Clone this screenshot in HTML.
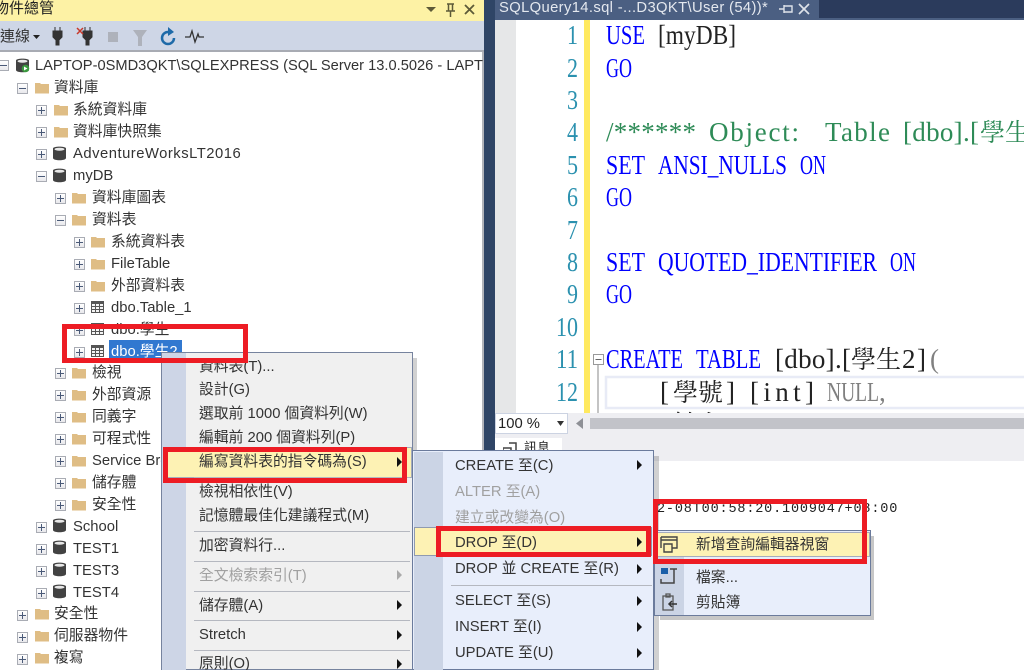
<!DOCTYPE html>
<html><head><meta charset="utf-8"><style>
html,body{margin:0;padding:0;background:#fff}
#p{position:relative;width:1024px;height:670px;overflow:hidden;background:#fff;font-family:"Liberation Sans","Noto Sans CJK TC",sans-serif;font-size:14.8px;color:#333}
#p div,#p svg{position:absolute}
.t{height:22px;line-height:24px;white-space:nowrap}
.x{width:9px;height:9px;border:1px solid #a9acb4;background:linear-gradient(#fff,#e8e8ec)}
.x:before{content:"";position:absolute;left:1px;top:4px;width:7px;height:1px;background:#4a5a78}
.p:after{content:"";position:absolute;left:4px;top:1px;width:1px;height:7px;background:#4a5a78}
.g{color:#a0a0a0!important}
.s{height:1px;background:#b5b8c0}
.a{width:0;height:0;border-left:5px solid #111;border-top:5px solid transparent;border-bottom:5px solid transparent}
.r{border:5px solid #ed1c24;box-sizing:border-box;z-index:20}
</style></head><body><div id="p">
<svg width="0" height="0"><defs>
<g id="f"><path d="M0 3h5l1 1h8v9.500H0z" fill="#dfbd85"/></g>
<g id="d"><path d="M0 2.500C0 0 13 0 13 2.500V12C13 15 0 15 0 12z" fill="#424242"/><ellipse cx="6.500" cy="3.200" rx="5" ry="1.500" fill="#e8e8e8"/></g>
<g id="b"><path d="M0 1h13v12H0z" fill="#555"/><path d="M1 4h3v2H1zM5 4h3v2H5zM9 4h3v2H9zM1 7h3v2H1zM5 7h3v2H5zM9 7h3v2H9zM1 10h3v2H1zM5 10h3v2H5zM9 10h3v2H9z" fill="#f4f4f4"/></g>
</defs></svg>

<!-- left title & toolbar -->
<div style="left:0;top:0;width:484px;height:21px;background:#fdf2a5"></div>
<div class="t" style="left:-6px;top:-3px;font-size:15px;color:#222">物件總管</div>
<svg style="left:425px;top:2px" width="56" height="16" viewBox="0 0 56 16"><path d="M1 5h10L6 10z" fill="#5d5a38"/><path d="M22 2h7M23.500 2v7h4V2M21 9h9M25.500 9v6" stroke="#5d5a38" fill="none" stroke-width="1.500"/><path d="M40 3l9 9M49 3l-9 9" stroke="#5d5a38" stroke-width="1.800"/></svg>
<div style="left:0;top:21px;width:484px;height:31px;background:#ced6e6;border-bottom:2px solid #a8abb3;box-sizing:border-box"></div>
<div class="t" style="left:0;top:25px;font-size:15px">連線</div>
<svg style="left:33px;top:35px" width="8" height="5"><path d="M0 0h7L3.500 4z" fill="#222"/></svg>
<svg style="left:52px;top:24px" width="160" height="24" viewBox="0 0 160 24"><path d="M3 3v4M8 3v4M1 7h9v6l-3 3v5H4v-5l-3-3z" fill="#333" stroke="#333"/><path d="M33 3v4M38 3v4M31 7h9v6l-3 3v5h-3v-5l-3-3z" fill="#333" stroke="#333"/><path d="M25 4l6 6M31 4l-6 6" stroke="#c8392b" stroke-width="1.500"/><rect x="56" y="8" width="10" height="10" fill="#aeb2bb"/><path d="M81 6h14l-5 7v9h-4v-9z" fill="#aeb2bb"/><path d="M116 8A6 6 0 1 0 122 14" fill="none" stroke="#1e6aa8" stroke-width="2.500"/><path d="M116 3l6 5-6 4z" fill="#1e6aa8"/><path d="M133 13h5l2-6 3 11 3-8 1 3h5" fill="none" stroke="#333" stroke-width="1.300"/></svg>

<!-- tree -->
<div style="left:482px;top:52px;width:2px;height:618px;background:#b2b4ba"></div>

<div class="x" style="left:-2px;top:60px"></div>
<svg style="left:16px;top:58px" width="14" height="15"><use href="#d"/><circle cx="9.500" cy="10.500" r="3.800" fill="#3a9a3e"/><path d="M8 8.500v4l3.500-2z" fill="#fff"/></svg>
<div class="t" style="left:35px;top:54px;font-size:14.66px">LAPTOP-0SMD3QKT\SQLEXPRESS (SQL Server 13.0.5026 - LAPT</div>

<div class="x" style="left:17px;top:83px"></div><svg style="left:35px;top:80px" width="14" height="14"><use href="#f"/></svg><div class="t" style="left:54px;top:76px">資料庫</div>
<div class="x p" style="left:36px;top:105px"></div><svg style="left:54px;top:102px" width="14" height="14"><use href="#f"/></svg><div class="t" style="left:73px;top:98px">系統資料庫</div>
<div class="x p" style="left:36px;top:127px"></div><svg style="left:54px;top:124px" width="14" height="14"><use href="#f"/></svg><div class="t" style="left:73px;top:120px">資料庫快照集</div>
<div class="x p" style="left:36px;top:149px"></div><svg style="left:53px;top:146px" width="14" height="15"><use href="#d"/></svg><div class="t" style="left:73px;top:142px;letter-spacing:.5px">AdventureWorksLT2016</div>
<div class="x" style="left:36px;top:171px"></div><svg style="left:53px;top:168px" width="14" height="15"><use href="#d"/></svg><div class="t" style="left:73px;top:164px">myDB</div>
<div class="x p" style="left:55px;top:193px"></div><svg style="left:72px;top:190px" width="14" height="14"><use href="#f"/></svg><div class="t" style="left:92px;top:186px">資料庫圖表</div>
<div class="x" style="left:55px;top:215px"></div><svg style="left:72px;top:212px" width="14" height="14"><use href="#f"/></svg><div class="t" style="left:92px;top:208px">資料表</div>
<div class="x p" style="left:74px;top:237px"></div><svg style="left:91px;top:234px" width="14" height="14"><use href="#f"/></svg><div class="t" style="left:111px;top:230px">系統資料表</div>
<div class="x p" style="left:74px;top:259px"></div><svg style="left:91px;top:256px" width="14" height="14"><use href="#f"/></svg><div class="t" style="left:111px;top:252px">FileTable</div>
<div class="x p" style="left:74px;top:281px"></div><svg style="left:91px;top:278px" width="14" height="14"><use href="#f"/></svg><div class="t" style="left:111px;top:274px">外部資料表</div>
<div class="x p" style="left:74px;top:303px"></div><svg style="left:91px;top:300px" width="13" height="14"><use href="#b"/></svg><div class="t" style="left:111px;top:296px">dbo.Table_1</div>
<div class="x p" style="left:74px;top:325px"></div><svg style="left:91px;top:322px" width="13" height="14"><use href="#b"/></svg><div class="t" style="left:111px;top:318px">dbo.學生</div>
<div class="x p" style="left:74px;top:347px"></div><svg style="left:91px;top:344px" width="13" height="14"><use href="#b"/></svg>
<div class="t" style="left:109px;top:340px;width:73px;height:21px;background:#3178d0;color:#fff;padding-left:2px;box-sizing:border-box">dbo.學生2</div>
<div class="x p" style="left:55px;top:368px"></div><svg style="left:72px;top:365px" width="14" height="14"><use href="#f"/></svg><div class="t" style="left:92px;top:361px">檢視</div>
<div class="x p" style="left:55px;top:390px"></div><svg style="left:72px;top:387px" width="14" height="14"><use href="#f"/></svg><div class="t" style="left:92px;top:383px">外部資源</div>
<div class="x p" style="left:55px;top:412px"></div><svg style="left:72px;top:409px" width="14" height="14"><use href="#f"/></svg><div class="t" style="left:92px;top:405px">同義字</div>
<div class="x p" style="left:55px;top:434px"></div><svg style="left:72px;top:431px" width="14" height="14"><use href="#f"/></svg><div class="t" style="left:92px;top:427px">可程式性</div>
<div class="x p" style="left:55px;top:456px"></div><svg style="left:72px;top:453px" width="14" height="14"><use href="#f"/></svg><div class="t" style="left:92px;top:449px">Service Broker</div>
<div class="x p" style="left:55px;top:478px"></div><svg style="left:72px;top:475px" width="14" height="14"><use href="#f"/></svg><div class="t" style="left:92px;top:471px">儲存體</div>
<div class="x p" style="left:55px;top:500px"></div><svg style="left:72px;top:497px" width="14" height="14"><use href="#f"/></svg><div class="t" style="left:92px;top:493px">安全性</div>
<div class="x p" style="left:36px;top:522px"></div><svg style="left:53px;top:518px" width="14" height="15"><use href="#d"/></svg><div class="t" style="left:73px;top:515px">School</div>
<div class="x p" style="left:36px;top:544px"></div><svg style="left:53px;top:540px" width="14" height="15"><use href="#d"/></svg><div class="t" style="left:73px;top:537px">TEST1</div>
<div class="x p" style="left:36px;top:566px"></div><svg style="left:53px;top:562px" width="14" height="15"><use href="#d"/></svg><div class="t" style="left:73px;top:559px">TEST3</div>
<div class="x p" style="left:36px;top:588px"></div><svg style="left:53px;top:584px" width="14" height="15"><use href="#d"/></svg><div class="t" style="left:73px;top:581px">TEST4</div>
<div class="x p" style="left:17px;top:610px"></div><svg style="left:35px;top:606px" width="14" height="14"><use href="#f"/></svg><div class="t" style="left:54px;top:602px">安全性</div>
<div class="x p" style="left:17px;top:632px"></div><svg style="left:35px;top:628px" width="14" height="14"><use href="#f"/></svg><div class="t" style="left:54px;top:624px">伺服器物件</div>
<div class="x p" style="left:17px;top:654px"></div><svg style="left:35px;top:650px" width="14" height="14"><use href="#f"/></svg><div class="t" style="left:54px;top:646px">複寫</div>

<!-- right side -->
<div style="left:484px;top:0;width:11px;height:670px;background:#2f4566"></div>
<div style="left:495px;top:0;width:529px;height:19px;background:#2b3b5c"></div>
<div style="left:495px;top:0;width:324px;height:18px;background:#4b5f82"></div>
<div style="left:495px;top:18px;width:529px;height:2px;background:#4b5f82"></div>
<div class="t" style="left:499px;top:-4px;color:#e4e8ef;letter-spacing:.35px">SQLQuery14.sql -...D3QKT\User (54))*</div>
<svg style="left:778px;top:2px" width="36" height="14" viewBox="0 0 36 14"><path d="M1 7h5M6 4h8v6H6zM6 3v8" stroke="#dfe3ea" fill="none" stroke-width="1.400"/><path d="M21 2l10 10M31 2L21 12" stroke="#dfe3ea" stroke-width="1.700"/></svg>

<!-- editor -->
<div style="left:495px;top:20px;width:21px;height:393px;background:#e6e7e8"></div>
<div style="left:584px;top:20px;width:6px;height:393px;background:#ffe95f"></div>
<svg style="left:495px;top:0" width="529" height="413" viewBox="495 0 529 413" font-family="'Liberation Serif','Noto Serif CJK TC',serif" font-size="27">
<rect x="606" y="377" width="430" height="31" fill="none" stroke="#e8ebf6" stroke-width="2.500"/>
<path d="M598 364V413" stroke="#8a8a8a"/><rect x="593.500" y="354.500" width="10" height="10" fill="#fff" stroke="#999"/><path d="M595.500 359.500h6" stroke="#666"/>
<g fill="#2b91af" text-anchor="end">
<text x="578" y="44" textLength="11" lengthAdjust="spacingAndGlyphs">1</text><text x="578" y="77" textLength="11" lengthAdjust="spacingAndGlyphs">2</text><text x="578" y="109" textLength="11" lengthAdjust="spacingAndGlyphs">3</text><text x="578" y="141" textLength="11" lengthAdjust="spacingAndGlyphs">4</text><text x="578" y="174" textLength="11" lengthAdjust="spacingAndGlyphs">5</text><text x="578" y="206" textLength="11" lengthAdjust="spacingAndGlyphs">6</text><text x="578" y="239" textLength="11" lengthAdjust="spacingAndGlyphs">7</text><text x="578" y="271" textLength="11" lengthAdjust="spacingAndGlyphs">8</text><text x="578" y="303" textLength="11" lengthAdjust="spacingAndGlyphs">9</text><text x="578" y="336" textLength="22" lengthAdjust="spacingAndGlyphs">10</text><text x="578" y="368" textLength="22" lengthAdjust="spacingAndGlyphs">11</text><text x="578" y="401" textLength="22" lengthAdjust="spacingAndGlyphs">12</text>
</g>
<g fill="#0000ff">
<text x="606" y="44" textLength="39" lengthAdjust="spacingAndGlyphs">USE</text>
<text x="606" y="77" textLength="26" lengthAdjust="spacingAndGlyphs">GO</text>
<text x="606" y="174" textLength="39" lengthAdjust="spacingAndGlyphs">SET</text>
<text x="658" y="174" textLength="129" lengthAdjust="spacingAndGlyphs">ANSI_NULLS</text>
<text x="800" y="174" textLength="26" lengthAdjust="spacingAndGlyphs">ON</text>
<text x="606" y="206" textLength="26" lengthAdjust="spacingAndGlyphs">GO</text>
<text x="606" y="271" textLength="39" lengthAdjust="spacingAndGlyphs">SET</text>
<text x="658" y="271" textLength="219" lengthAdjust="spacingAndGlyphs">QUOTED_IDENTIFIER</text>
<text x="890" y="271" textLength="26" lengthAdjust="spacingAndGlyphs">ON</text>
<text x="606" y="303" textLength="26" lengthAdjust="spacingAndGlyphs">GO</text>
<text x="606" y="368" textLength="77" lengthAdjust="spacingAndGlyphs">CREATE</text>
<text x="696" y="368" textLength="65" lengthAdjust="spacingAndGlyphs">TABLE</text>
</g>
<g fill="#222">
<text x="658" y="44" textLength="78" lengthAdjust="spacingAndGlyphs">[myDB]</text>
<text x="775" y="368" textLength="76" lengthAdjust="spacing">[dbo].[</text>
<text x="851" y="368" font-size="25">學生</text>
<text x="902" y="368">2</text>
<text x="917" y="368">]</text>
<text x="660" y="401">[</text>
<text x="673" y="401" font-size="25">學號</text>
<text x="726" y="401">]</text>
<text x="750" y="401" textLength="64" lengthAdjust="spacing">[int]</text>
<text x="660" y="433">[</text>
<text x="673" y="433" font-size="25">姓名</text>
</g>
<text x="930" y="368" fill="#808080">(</text>
<text x="827" y="401" fill="#808080" textLength="52" lengthAdjust="spacingAndGlyphs">NULL</text>
<text x="879" y="401" fill="#808080">,</text>
<g fill="#2e8b57">
<text x="606" y="141" textLength="90" lengthAdjust="spacing">/******</text>
<text x="709" y="141" textLength="90" lengthAdjust="spacing">Object:</text>
<text x="825" y="141" textLength="65" lengthAdjust="spacing">Table</text>
<text x="903" y="141" textLength="76" lengthAdjust="spacing">[dbo].[</text>
<text x="980" y="141" font-size="25">學生</text>
</g>
</svg>

<!-- zoom bar -->
<div style="left:495px;top:413px;width:529px;height:22px;background:#eeeef2"></div>
<div style="left:495px;top:413px;width:73px;height:21px;background:#fff;border:1px solid #ccd3e2;box-sizing:border-box"></div>
<div class="t" style="left:498px;top:412px;color:#222">100 %</div>
<svg style="left:556px;top:421px" width="10" height="6"><path d="M1 0h7L4.500 5z" fill="#333"/></svg>
<svg style="left:575px;top:418px" width="10" height="12"><path d="M8 0v11L1 5.500z" fill="#8e9096"/></svg>
<div style="left:590px;top:418px;width:434px;height:11px;background:#c2c3c9"></div>
<div style="left:495px;top:435px;width:529px;height:26px;background:#eeeef2"></div>
<div style="left:495px;top:438px;width:67px;height:23px;background:#fff"></div>
<svg style="left:503px;top:442px" width="16" height="14"><path d="M0 6h8v7H0zM6 1h7v10h-3" fill="none" stroke="#444" stroke-width="1.500"/></svg>
<div class="t" style="left:524px;top:436px;font-size:13px;color:#222">訊息</div>
<div class="t" style="left:657px;top:498px;font-family:'Liberation Mono',monospace;font-size:13.5px;letter-spacing:.83px;color:#222">2-08T00:58:20.1009047+08:00</div>

<!-- menu 1 -->
<div style="left:167px;top:358px;width:250px;height:312px;background:rgba(0,0,0,.18)"></div>
<div style="left:161px;top:352px;width:252px;height:318px;background:#f0f0f0;border:1px solid #76839e;box-sizing:border-box"></div>
<div style="left:162px;top:353px;width:24px;height:317px;background:#cdd5e6"></div>
<div class="t" style="left:199px;top:355px">資料表(T)...</div>
<div class="t" style="left:199px;top:378px">設計(G)</div>
<div class="t" style="left:199px;top:402px">選取前 1000 個資料列(W)</div>
<div class="t" style="left:199px;top:426px">編輯前 200 個資料列(P)</div>
<div style="left:164px;top:447px;width:248px;height:31px;background:#fdf2b4;border:1px solid #a5acbd;box-sizing:border-box"></div>
<div class="t" style="left:199px;top:450px">編寫資料表的指令碼為(S)</div>
<div class="a" style="left:397px;top:457px"></div>
<div class="s" style="left:194px;top:477px;width:216px"></div>
<div class="t" style="left:199px;top:480px">檢視相依性(V)</div>
<div class="t" style="left:199px;top:504px">記憶體最佳化建議程式(M)</div>
<div class="s" style="left:194px;top:531px;width:216px"></div>
<div class="t" style="left:199px;top:534px">加密資料行...</div>
<div class="s" style="left:194px;top:561px;width:216px"></div>
<div class="t g" style="left:199px;top:564px">全文檢索索引(T)</div>
<div class="a" style="left:397px;top:570px;border-left-color:#aaa"></div>
<div class="s" style="left:194px;top:591px;width:216px"></div>
<div class="t" style="left:199px;top:594px">儲存體(A)</div>
<div class="a" style="left:397px;top:600px"></div>
<div class="s" style="left:194px;top:620px;width:216px"></div>
<div class="t" style="left:199px;top:623px">Stretch</div>
<div class="a" style="left:397px;top:630px"></div>
<div class="s" style="left:194px;top:650px;width:216px"></div>
<div class="t" style="left:199px;top:652px">原則(O)</div>
<div class="a" style="left:397px;top:659px"></div>

<!-- menu 2 -->
<div style="left:419px;top:456px;width:240px;height:214px;background:rgba(0,0,0,.18)"></div>
<div style="left:412px;top:450px;width:242px;height:220px;background:#e8eefb;border:1px solid #6b7b9c;box-sizing:border-box"></div>
<div style="left:414px;top:452px;width:29px;height:218px;background:#cbd4e5"></div>
<div class="t" style="left:455px;top:454px">CREATE 至(C)</div><div class="a" style="left:637px;top:460px"></div>
<div class="t g" style="left:455px;top:480px">ALTER 至(A)</div>
<div class="t g" style="left:455px;top:506px">建立或改變為(O)</div>
<div style="left:414px;top:527px;width:238px;height:29px;background:#fdf2b4;border:1px solid #8f9ab0;box-sizing:border-box"></div>
<div class="t" style="left:455px;top:531px">DROP 至(D)</div><div class="a" style="left:637px;top:537px"></div>
<div class="t" style="left:455px;top:557px">DROP 並 CREATE 至(R)</div><div class="a" style="left:637px;top:564px"></div>
<div class="s" style="left:451px;top:585px;width:201px"></div>
<div class="t" style="left:455px;top:589px">SELECT 至(S)</div><div class="a" style="left:637px;top:596px"></div>
<div class="t" style="left:455px;top:615px">INSERT 至(I)</div><div class="a" style="left:637px;top:622px"></div>
<div class="t" style="left:455px;top:641px">UPDATE 至(U)</div><div class="a" style="left:637px;top:648px"></div>

<!-- menu 3 -->
<div style="left:660px;top:536px;width:214px;height:84px;background:rgba(0,0,0,.22)"></div>
<div style="left:654px;top:530px;width:217px;height:86px;background:#e8eefb;border:1px solid #6b7b9c;box-sizing:border-box"></div>
<div style="left:655px;top:557px;width:29px;height:58px;background:#cbd4e5"></div>
<div style="left:655px;top:532px;width:215px;height:25px;background:#fdf2b4;border:1px solid #a5acbd;box-sizing:border-box"></div>
<svg style="left:660px;top:536px" width="18" height="17"><path d="M1 1h16v11h-5M1 4h16M1 1v11M4 8h8v8H4z" fill="none" stroke="#444" stroke-width="1.400"/></svg>
<div class="t" style="left:696px;top:533px">新增查詢編輯器視窗</div>
<svg style="left:660px;top:567px" width="18" height="19"><path d="M1 1h7v6H1z" fill="#1b5fa8"/><path d="M10 2h7M14 2v9M1 12v4h13v-5" fill="none" stroke="#444" stroke-width="1.500"/></svg>
<div class="t" style="left:696px;top:566px">檔案...</div>
<svg style="left:661px;top:593px" width="17" height="18"><path d="M2 3h10v14H2zM5 1h4v3H5z" fill="none" stroke="#555" stroke-width="1.300"/><path d="M16 11H8M11 8l-3 3 3 3" fill="none" stroke="#333" stroke-width="1.500"/></svg>
<div class="t" style="left:696px;top:591px">剪貼簿</div>

<!-- red annotations -->
<div class="r" style="left:62px;top:324px;width:186px;height:39px"></div>
<div class="r" style="left:163px;top:447px;width:244px;height:36px"></div>
<div class="r" style="left:436px;top:526px;width:215px;height:31px"></div>
<div class="r" style="left:653px;top:499px;width:214px;height:65px"></div>
</div></body></html>
